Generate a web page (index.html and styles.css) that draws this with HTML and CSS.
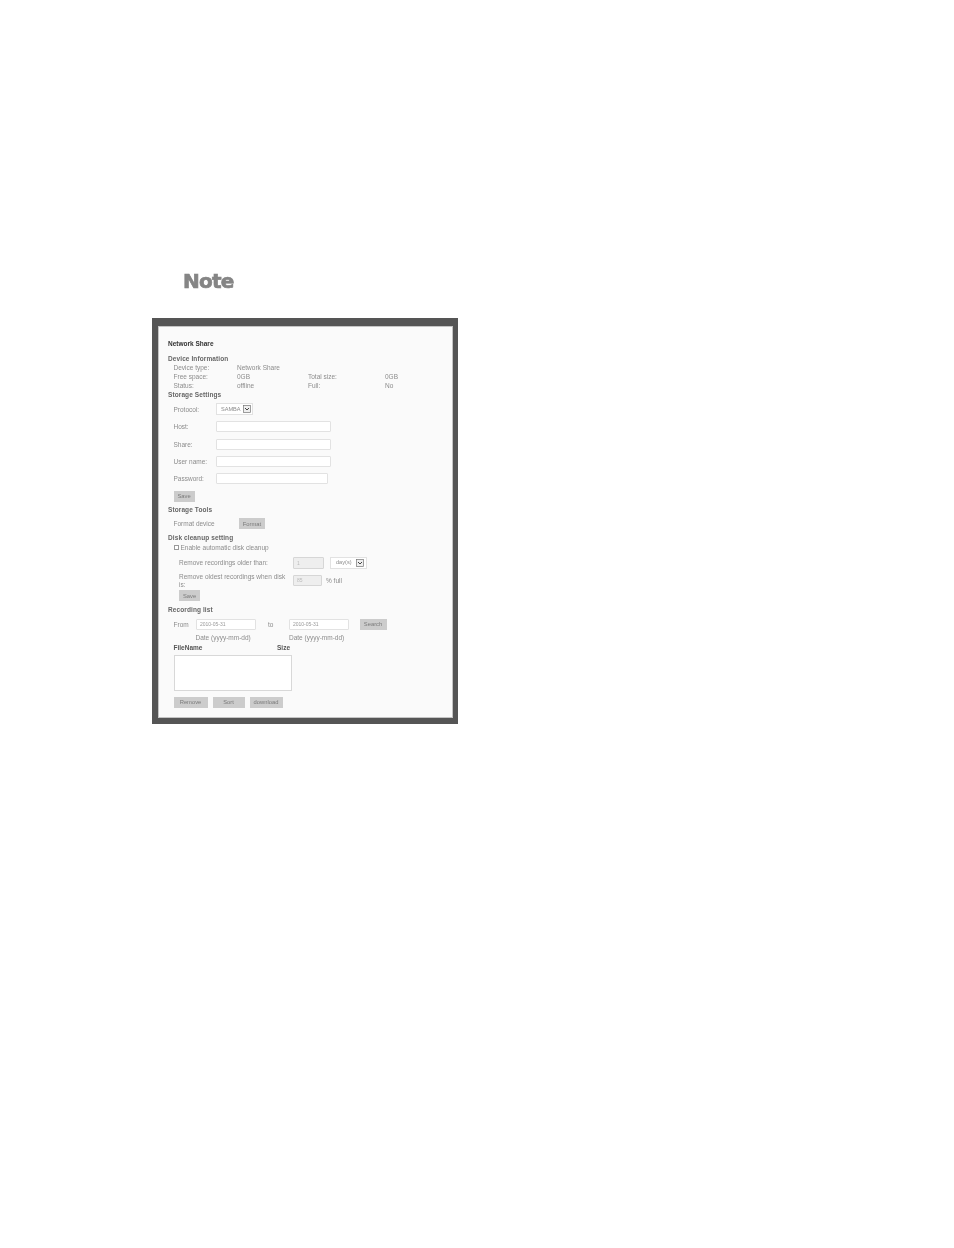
FILE: index.html
```html
<!DOCTYPE html>
<html lang="en">
<head>
<meta charset="utf-8">
<title>Network Share</title>
<link rel="stylesheet" href="styles.css">
</head>
<body>
<div class="page">
  <div class="note">Note</div>
  <div class="frame">
    <div class="panel">
      <div class="title">Network Share</div>
      <div class="heading h-device">Device Information</div>
      <div class="info indent">
        <span>Device type:</span><span>Network Share</span><span></span><span></span>
        <span>Free space:</span><span>0GB</span><span>Total size:</span><span>0GB</span>
        <span>Status:</span><span>offline</span><span>Full:</span><span>No</span>
      </div>
      <div class="heading h-storage">Storage Settings</div>
      <div class="form indent">
        <div class="row"><label class="lbl">Protocol:</label><div class="select s-proto"><span>SAMBA</span><svg class="arrow" viewBox="0 0 8 8"><rect x=".5" y=".5" width="7" height="7" fill="#eee" stroke="#777" stroke-width=".7"/><path d="M2 3l2 2 2-2" fill="none" stroke="#444" stroke-width="1"/></svg></div></div>
        <div class="row"><label class="lbl">Host:</label><input class="field f-wide"></div>
        <div class="row"><label class="lbl">Share:</label><input class="field f-wide"></div>
        <div class="row"><label class="lbl">User name:</label><input class="field f-wide"></div>
        <div class="row"><label class="lbl">Password:</label><input class="field f-pass"></div>
        <div class="row"><button class="btn b-save">Save</button></div>
      </div>
      <div class="heading h-tools">Storage Tools</div>
      <div class="row indent r-format"><span class="lbl-format">Format device</span><button class="btn b-format">Format</button></div>
      <div class="heading h-disk">Disk cleanup setting</div>
      <div class="check indent"><span class="box"></span>Enable automatic disk cleanup</div>
      <div class="cleanup">
        <div class="row r-older"><span class="lbl-clean">Remove recordings older than:</span><input class="field dis f-days" value="1" disabled><div class="select s-days"><span>day(s)</span><svg class="arrow" viewBox="0 0 8 8"><rect x=".5" y=".5" width="7" height="7" fill="#eee" stroke="#777" stroke-width=".7"/><path d="M2 3l2 2 2-2" fill="none" stroke="#444" stroke-width="1"/></svg></div></div>
        <div class="row r-oldest"><span class="lbl-clean two">Remove oldest recordings when disk is:</span><input class="field dis f-pct" value="85" disabled><span class="pct">% full</span></div>
        <button class="btn b-save">Save</button>
      </div>
      <div class="heading h-list">Recording list</div>
      <div class="row indent r-search"><span class="from">From</span><input class="field f-date" value="2010-05-31"><span class="to">to</span><input class="field f-date" value="2010-05-31"><button class="btn b-search">Search</button></div>
      <div class="dates"><span class="date-a">Date (yyyy-mm-dd)</span><span>Date (yyyy-mm-dd)</span></div>
      <div class="cols indent"><b class="c-file">FileName</b><b>Size</b></div>
      <div class="listbox"></div>
      <div class="row indent r-actions"><button class="btn b-remove">Remove</button><button class="btn b-sort">Sort</button><button class="btn b-dl">download</button></div>
    </div>
  </div>
</div>
</body>
</html>
```
FILE: styles.css
```css
* { box-sizing: border-box; }
html, body { margin: 0; background: #fff; }
.page { width: 954px; height: 1248px; padding: 272px 0 0 152px; font-family: "Liberation Sans", Arial, sans-serif; }
.note { margin-left: 31px; height: 18px; line-height: 18px; font-family: "DejaVu Sans", sans-serif; font-weight: 700; font-size: 20px; letter-spacing: -.8px; color: #858585; -webkit-text-stroke: .7px #858585; filter: blur(.2px); }
.frame { margin-top: 28px; width: 306px; height: 406px; padding: 8px 5px 6px 6px; background: #555; }
.panel { width: 295px; height: 392px; padding: 12px 0 0 9px; background: #fafafa; border: 1px solid #c4c4c4; color: #8c8c8c; font-size: 6.5px; line-height: 9px; filter: blur(.35px); }
.title { height: 9px; font-weight: 700; color: #333; }
.heading { height: 9px; font-weight: 700; color: #666; letter-spacing: .1px; }
.h-device { margin-top: 5.6px; }
.h-storage { margin-top: .5px; }
.h-tools { margin-top: 3px; }
.h-disk { margin-top: 4px; }
.h-list { margin-top: 4px; }
.indent { margin-left: 5.5px; }
.info { display: grid; grid-template-columns: 63.5px 71px 77px auto; grid-auto-rows: 9px; margin-top: .3px; }
.form { display: flex; flex-direction: column; gap: 6px; margin-top: 4.2px; }
.row { display: flex; align-items: center; height: 11.4px; }
.lbl { width: 42.5px; }
.select { display: flex; align-items: center; justify-content: space-between; background: #fff; border: .6px solid #e2e2e2; height: 12px; padding: 0 1px 0 4px; font-size: 5.6px; }
.s-proto { width: 37px; }
.s-days { width: 37px; margin-left: 6px; padding-left: 5px; padding-right: 2px; }
.arrow { width: 8px; height: 8px; }
.field { display: block; height: 11px; padding: 0 3px; background: #fff; border: .7px solid #e2e2e2; border-radius: 1px; font: 5px "Liberation Sans", Arial, sans-serif; color: #999; }
.f-wide { width: 115px; }
.f-pass { width: 112px; }
.btn { display: block; height: 11px; padding: 0; border: 0; background: #ccc; color: #7a7a7a; font: 5.8px "Liberation Sans", Arial, sans-serif; }
.b-save { width: 21px; }
.r-format { margin-top: 4.5px; height: 11px; }
.lbl-format { width: 65.5px; }
.b-format { width: 26px; }
.check { display: flex; align-items: center; height: 9px; margin-top: 1px; }
.box { width: 5px; height: 5px; margin-right: 2px; background: #fff; border: .6px solid #999; }
.cleanup { margin: 4.5px 0 0 11px; }
.r-older { height: 12px; }
.lbl-clean { width: 114px; padding-right: 6px; }
.f-days { width: 31px; height: 12px; }
.dis { background: #eee; border-color: #d6d6d6; color: #bbb; }
.r-oldest { align-items: flex-start; height: 17px; margin-top: 6px; line-height: 8px; }
.r-oldest .two { margin-top: -2px; }
.f-pct { width: 29px; }
.pct { margin-left: 4px; line-height: 11px; }
.cleanup .b-save { margin-top: -1.5px; }
.r-search { margin-top: 4.5px; height: 11px; }
.from { width: 22.5px; }
.f-date { width: 60px; }
.to { width: 33px; padding-left: 12px; }
.b-search { width: 27px; margin-left: 10.5px; }
.dates { display: flex; height: 9px; margin: 3px 0 0 27.5px; }
.date-a { width: 93.5px; }
.cols { display: flex; height: 9px; margin-top: 1px; color: #555; }
.c-file { width: 103.5px; }
.listbox { width: 118px; height: 36px; margin: 3px 0 0 5.5px; background: #fff; border: .7px solid #d8d8d8; }
.r-actions { gap: 5px; height: 11px; margin-top: 6px; }
.b-remove { width: 34px; }
.b-sort { width: 32px; }
.b-dl { width: 33px; }
```
